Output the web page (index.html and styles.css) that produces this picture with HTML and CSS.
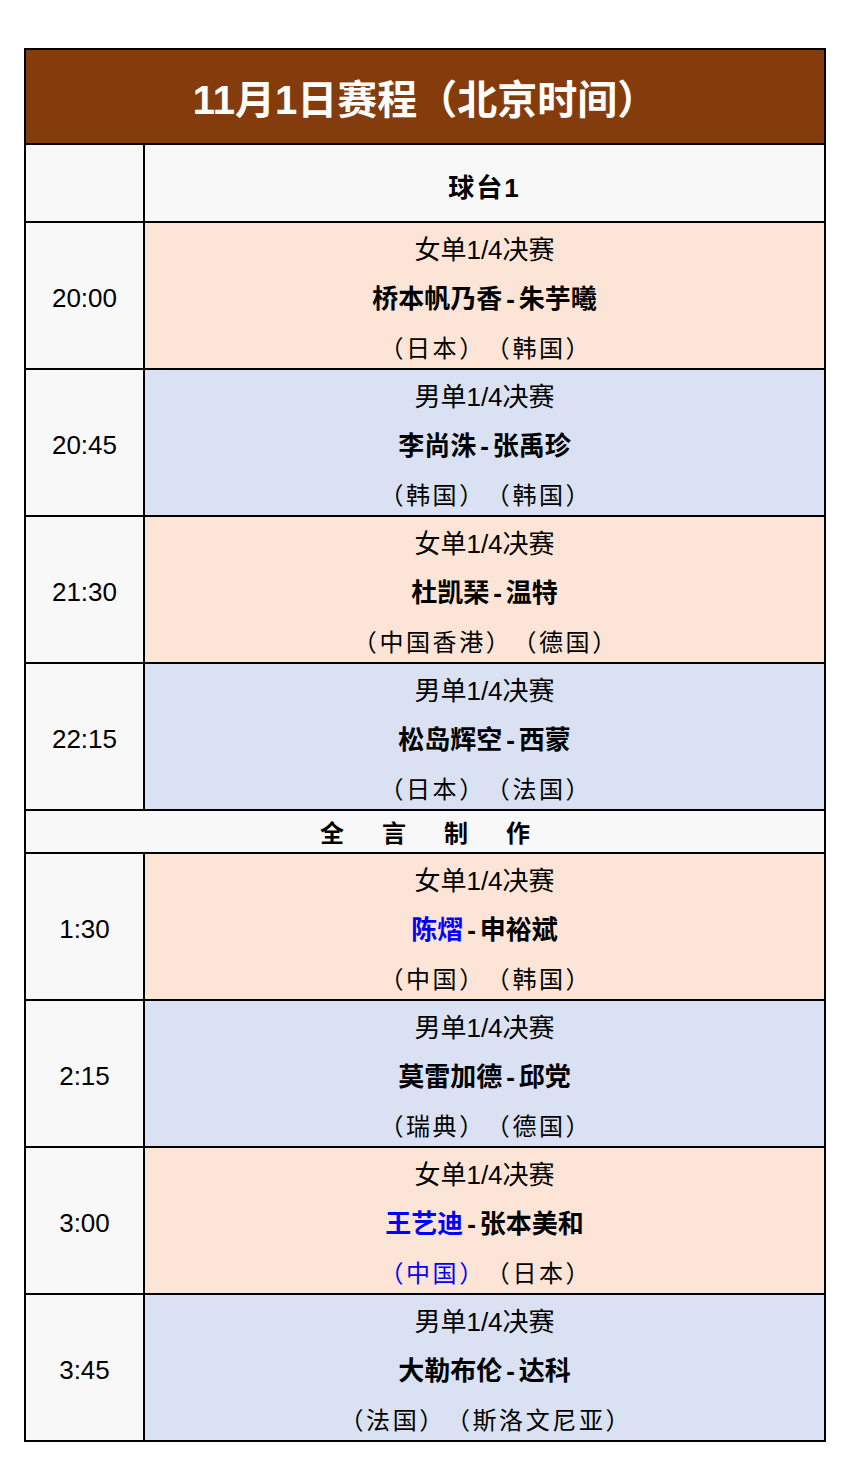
FILE: index.html
```html
<!DOCTYPE html>
<html lang="zh-CN">
<head>
<meta charset="utf-8">
<title>11月1日赛程</title>
<link rel="stylesheet" href="styles.css">
</head>
<body>
<div class="schedule">
  <div class="title">11月1日赛程（北京时间）</div>

  <div class="time blank"></div>
  <div class="table-head">球台1</div>

  <div class="time">20:00</div>
  <div class="match peach">
    <div class="round">女单1/4决赛</div>
    <div class="names">桥本帆乃香<span class="dash">-</span>朱芋曦</div>
    <div class="country">（日本）（韩国）</div>
  </div>

  <div class="time">20:45</div>
  <div class="match blue">
    <div class="round">男单1/4决赛</div>
    <div class="names">李尚洙<span class="dash">-</span>张禹珍</div>
    <div class="country">（韩国）（韩国）</div>
  </div>

  <div class="time">21:30</div>
  <div class="match peach">
    <div class="round">女单1/4决赛</div>
    <div class="names">杜凯琹<span class="dash">-</span>温特</div>
    <div class="country">（中国香港）（德国）</div>
  </div>

  <div class="time">22:15</div>
  <div class="match blue">
    <div class="round">男单1/4决赛</div>
    <div class="names">松岛辉空<span class="dash">-</span>西蒙</div>
    <div class="country">（日本）（法国）</div>
  </div>

  <div class="credit"><span>全</span><span>言</span><span>制</span><span>作</span></div>

  <div class="time">1:30</div>
  <div class="match peach">
    <div class="round">女单1/4决赛</div>
    <div class="names"><span class="cn">陈熠</span><span class="dash">-</span>申裕斌</div>
    <div class="country">（中国）（韩国）</div>
  </div>

  <div class="time">2:15</div>
  <div class="match blue">
    <div class="round">男单1/4决赛</div>
    <div class="names">莫雷加德<span class="dash">-</span>邱党</div>
    <div class="country">（瑞典）（德国）</div>
  </div>

  <div class="time">3:00</div>
  <div class="match peach">
    <div class="round">女单1/4决赛</div>
    <div class="names"><span class="cn">王艺迪</span><span class="dash">-</span>张本美和</div>
    <div class="country"><span class="cn">（中国）</span>（日本）</div>
  </div>

  <div class="time">3:45</div>
  <div class="match blue">
    <div class="round">男单1/4决赛</div>
    <div class="names">大勒布伦<span class="dash">-</span>达科</div>
    <div class="country">（法国）（斯洛文尼亚）</div>
  </div>
</div>
</body>
</html>
```

FILE: styles.css
```css
html, body {
  margin: 0;
  padding: 0;
  background: #ffffff;
}

body {
  font-family: "Liberation Sans", "Noto Sans CJK SC", sans-serif;
  color: #000000;
  text-spacing-trim: space-all;
}

.schedule {
  margin: 48px 0 0 24px;
  width: 802px;
  box-sizing: border-box;
  padding: 2px;
  background: #000000;
  display: grid;
  grid-template-columns: 117px 1fr;
  grid-template-rows: 93px 76px 145px 145px 145px 145px 41px 145px 145px 145px 145px;
  gap: 2px;
}

.title {
  grid-column: 1 / 3;
  background: #843c0c;
  color: #ffffff;
  font-size: 40px;
  font-weight: 700;
  display: flex;
  align-items: center;
  justify-content: center;
}

.time {
  background: #f8f8f8;
  font-size: 26px;
  display: flex;
  align-items: center;
  justify-content: center;
  padding-top: 6px;
}

.table-head {
  background: #f8f8f8;
  font-size: 26px;
  font-weight: 700;
  letter-spacing: 2px;
  display: flex;
  align-items: center;
  justify-content: center;
  padding-top: 4px;
}

.match {
  display: flex;
  flex-direction: column;
  align-items: center;
  justify-content: center;
  line-height: 49px;
  padding-top: 7px;
}

.peach { background: #fce4d6; }
.blue { background: #d9e1f2; }

.round {
  font-size: 26px;
}

.names {
  font-size: 26px;
  font-weight: 700;
}

.dash {
  margin: 0 4px;
}

.country {
  font-size: 24px;
  letter-spacing: 2.6px;
  padding-left: 2.6px;
}

.cn {
  color: #0000ff;
}

.credit {
  grid-column: 1 / 3;
  background: #f8f8f8;
  font-size: 24px;
  font-weight: 700;
  display: flex;
  align-items: center;
  justify-content: center;
  gap: 38px;
}
```
